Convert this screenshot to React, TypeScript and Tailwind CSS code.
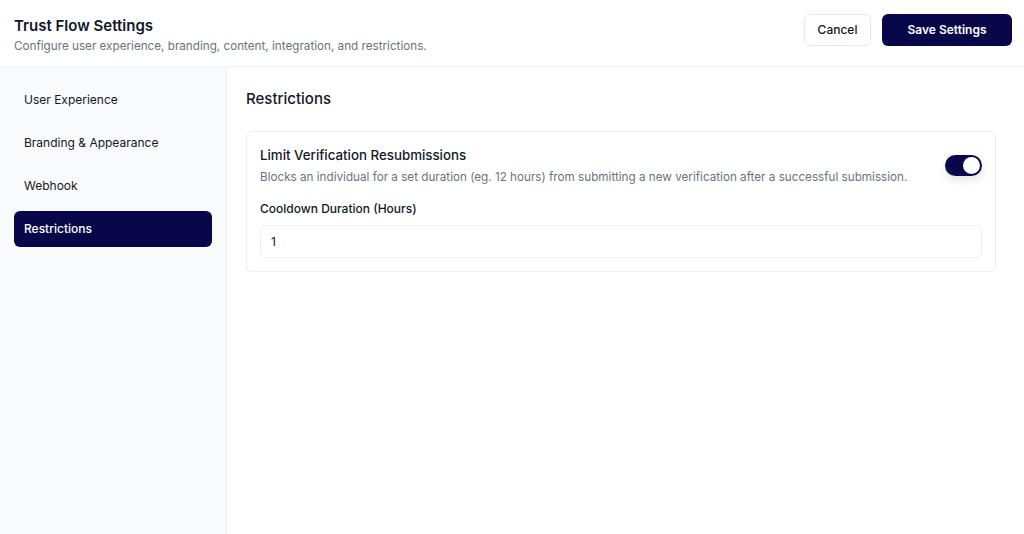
import { useState } from 'react';

const navItems = ['User Experience', 'Branding & Appearance', 'Webhook', 'Restrictions'];

export default function App() {
  const [active, setActive] = useState('Restrictions');
  const [limit, setLimit] = useState(true);
  const [hours, setHours] = useState('1');

  return (
    <div
      className="h-[534px] w-full bg-white text-[#111827] flex flex-col"
      style={{ fontFamily: 'Inter, "Noto Sans", sans-serif' }}
    >
      {/* Header */}
      <div className="h-[67px] shrink-0 border-b border-[#eef0f3] flex items-start justify-between pl-[14px] pr-[12px] pt-[14px]">
        <div className="pt-[2px]">
          <h1 className="text-[15px] leading-[20px] font-semibold text-[#0f172a]">Trust Flow Settings</h1>
          <p className="text-[11.7px] leading-[16px] text-[#6b7280] mt-[2px]">
            Configure user experience, branding, content, integration, and restrictions.
          </p>
        </div>
        <div className="flex items-center gap-[11px]">
          <button className="h-[32px] w-[67px] rounded-[6px] border border-[#e5e7eb] bg-white text-[12px] font-medium text-[#111827]">
            Cancel
          </button>
          <button className="h-[32px] w-[130px] rounded-[6px] bg-[#07074a] text-[12px] font-semibold text-white">
            Save Settings
          </button>
        </div>
      </div>

      <div className="flex flex-1 min-h-0">
        {/* Sidebar */}
        <div className="w-[227px] shrink-0 bg-[#f9fafb] border-r border-[#eef0f3] pt-[15px] px-[14px] flex flex-col gap-[7px]">
          {navItems.map((item) => (
            <button
              key={item}
              onClick={() => setActive(item)}
              className={
                item === active
                  ? 'h-[36px] rounded-[6px] bg-[#07074a] text-white text-[12px] font-medium text-left px-[10px]'
                  : 'h-[36px] rounded-[6px] text-[#111827] text-[12px] font-normal text-left px-[10px]'
              }
            >
              {item}
            </button>
          ))}
        </div>

        {/* Content */}
        <div className="flex-1 pt-[20px] pl-[19px] pr-[28px]">
          <h2 className="text-[15px] leading-[24px] font-medium text-[#111827] mb-[20px]">Restrictions</h2>

          <div className="border border-[#eceef2] rounded-[6px] px-[13px] pt-[13px] pb-[13px]">
            <div className="flex items-start justify-between">
              <div>
                <div className="text-[13.3px] leading-[20px] font-medium text-[#111827]">Limit Verification Resubmissions</div>
                <div className="text-[11.7px] leading-[18px] text-[#6b7280] mt-[3px]">
                  Blocks an individual for a set duration (eg. 12 hours) from submitting a new verification after a successful submission.
                </div>
              </div>
              <button
                onClick={() => setLimit(!limit)}
                className={
                  limit
                    ? 'mt-[10px] w-[37px] h-[21px] rounded-full bg-[#07074a] flex items-center justify-end px-[2px] shadow-[0_4px_8px_rgba(15,23,42,0.12)]'
                    : 'mt-[10px] w-[37px] h-[21px] rounded-full bg-[#e5e7eb] flex items-center justify-start px-[2px]'
                }
              >
                <span className="w-[17px] h-[17px] rounded-full bg-white block" />
              </button>
            </div>

            <div className="text-[12px] leading-[20px] font-medium text-[#111827] mt-[13px]">Cooldown Duration (Hours)</div>
            <input
              value={hours}
              onChange={(e) => setHours(e.target.value)}
              className="mt-[6px] w-full h-[33px] border border-[#eceef2] rounded-[6px] px-[10px] text-[12px] text-[#111827] outline-none"
            />
          </div>
        </div>
      </div>
    </div>
  );
}
